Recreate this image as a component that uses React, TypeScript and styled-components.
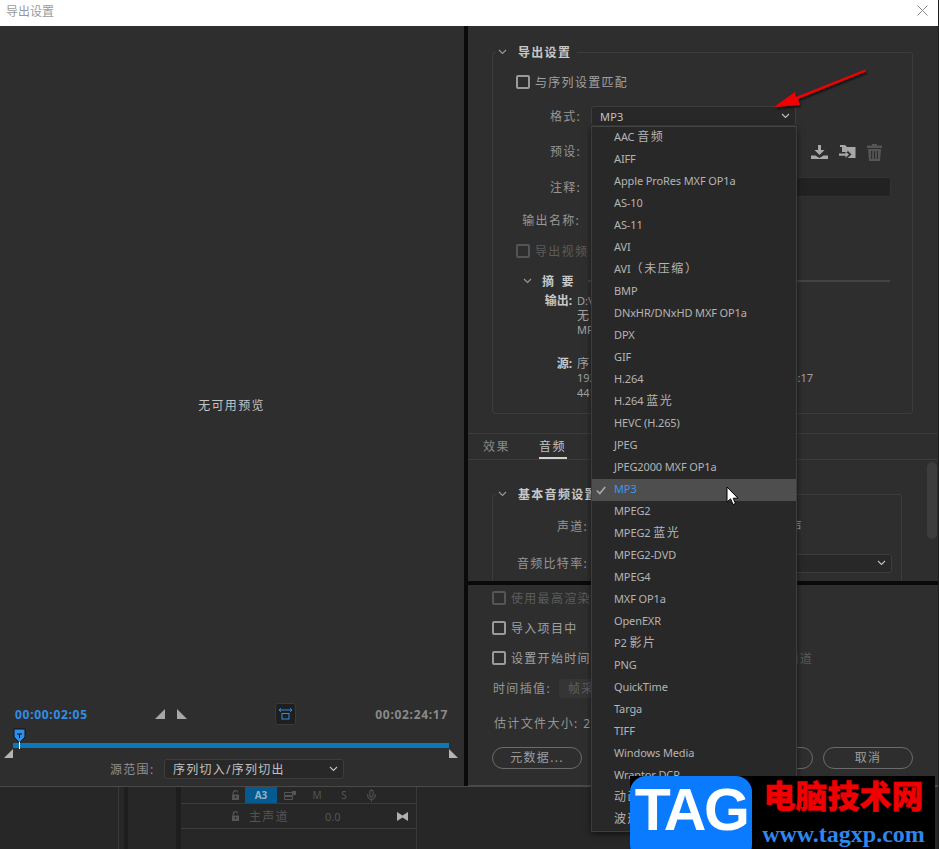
import React from "react";
import styled, { createGlobalStyle } from "styled-components";
import { Mic } from "lucide-react";

const Global = createGlobalStyle`
  html, body { margin: 0; padding: 0; background: #1c1c1c; }
  body { font-family: "Noto Sans", "Noto Sans CJK SC", sans-serif; font-size: 12px; color: #a9a9a9; }
  * { box-sizing: border-box; }
`;

const Page = styled.div`
  position: relative;
  width: 939px;
  height: 849px;
  overflow: hidden;
  padding-right: 1px;
  display: flex;
  flex-direction: column;
`;

const TitleBar = styled.div`
  height: 26px;
  background: #fff;
  display: flex;
  align-items: center;
  justify-content: space-between;
  padding: 0 10px 5px 6px;
  color: #9a9a9a;
  font-size: 12px;
`;

const Dialog = styled.div`
  height: 760px;
  display: flex;
  background: #2e2e2e;
`;

const LeftPanel = styled.div`
  width: 464px;
  display: flex;
  flex-direction: column;
`;

const Divider = styled.div`
  width: 4px;
  background: #0a0a0a;
`;

const RightPanel = styled.div`
  width: 470px;
  display: flex;
  flex-direction: column;
`;

const Preview = styled.div`
  height: 677px;
  padding-top: 372px;
  text-align: center;
  color: #c4c4c4;
  font-size: 12px;
  line-height: 16px;
  letter-spacing: 1.3px;
  margin-left: -1px;
`;

const TimeRow = styled.div`
  height: 22px;
  display: grid;
  grid-template-columns: 140px 120px auto 1fr;
  align-items: center;
  padding: 0 16px 0 15px;
`;

const TimeCode = styled.span<{ $blue?: boolean }>`
  font-size: 12px;
  font-weight: 700;
  letter-spacing: 0.7px;
  color: ${(p) => (p.$blue ? "#2f8fe8" : "#8a8a8a")};
  justify-self: ${(p) => (p.$blue ? "start" : "end")};
`;

const MarkGroup = styled.div`
  display: flex;
  gap: 12px;
  align-items: center;
`;

const FitButton = styled.div`
  width: 21px;
  height: 22px;
  background: #1f1f1f;
  border: 1px solid #3a3a3a;
  border-radius: 3px;
  display: flex;
  align-items: center;
  justify-content: center;
`;

const Track = styled.div`
  position: relative;
  height: 5px;
  margin: 18px 15px 0 13px;
  background: #0b78b8;
`;

const Playhead = styled.svg`
  position: absolute;
  left: 0;
  top: -15px;
`;

const TrackEnd = styled.svg<{ $right?: boolean }>`
  position: absolute;
  top: 6px;
  ${(p) => (p.$right ? "right: -9px;" : "left: -9px;")}
`;

const RangeRow = styled.div`
  display: flex;
  align-items: center;
  gap: 4px;
  margin: 11px 0 0 110px;
`;

const RangeLabel = styled.span`
  width: 50px;
  color: #8f8f8f;
  letter-spacing: 1.3px;
`;

const Select = styled.div<{ $w: number; $h?: number; $ml?: number; $end?: boolean }>`
  width: ${(p) => p.$w}px;
  height: ${(p) => p.$h ?? 20}px;
  margin-left: ${(p) => p.$ml ?? 0}px;
  background: #282828;
  border: 1px solid #3d3d3d;
  border-radius: 3px;
  display: flex;
  align-items: center;
  justify-content: ${(p) => (p.$end ? "flex-end" : "space-between")};
  padding: 0 5px 0 8px;
  color: #c2c2c2;
  letter-spacing: 1.25px;
  white-space: nowrap;
  overflow: hidden;
`;

const SelectValue = styled.span`
  font-size: 11px;
  letter-spacing: 0.2px;
`;

const UpperPane = styled.div`
  height: 407px;
  padding: 26px 25px 0 24px;
`;

const GroupBox = styled.div<{ $h: number; $w: number }>`
  width: ${(p) => p.$w}px;
  height: ${(p) => p.$h}px;
  border: 1px solid #3c3c3c;
  border-radius: 3px;
`;

const Legend = styled.div`
  margin: -10px 0 0 3px;
  height: 18px;
  width: fit-content;
  padding-right: 6px;
  background: #2e2e2e;
  display: flex;
  align-items: center;
  gap: 11px;
  padding-left: 2px;
  color: #c8c8c8;
  font-weight: 700;
  letter-spacing: 1.3px;
`;

const Row = styled.div<{ $mt: number }>`
  height: 20px;
  margin-top: ${(p) => p.$mt}px;
  display: flex;
  align-items: center;
  white-space: nowrap;
`;

const FieldLabel = styled.span<{ $w: number }>`
  width: ${(p) => p.$w}px;
  flex: none;
  text-align: right;
  color: #969696;
  letter-spacing: 1.3px;
`;

const CheckRow = styled(Row)<{ $x: number; $off?: boolean }>`
  margin-left: ${(p) => p.$x}px;
  gap: 5px;
  letter-spacing: 1.3px;
  color: ${(p) => (p.$off ? "#5c5c5c" : "#a0a0a0")};
`;

const Check = styled.span<{ $off?: boolean }>`
  width: 14px;
  height: 14px;
  border: 2px solid ${(p) => (p.$off ? "#555" : "#9a9a9a")};
  border-radius: 2px;
  flex: none;
`;

const ToolIcons = styled.div`
  margin-left: 230px;
  padding-top: 2px;
  display: flex;
  gap: 11px;
  align-items: center;
`;

const CommentInput = styled.div`
  width: 300px;
  height: 20px;
  margin-left: 10px;
  background: #222;
  border: 1px solid #333;
  border-radius: 3px;
`;

const SummaryHead = styled(Row)`
  margin-left: 30px;
  gap: 10px;
  color: #c8c8c8;
  font-weight: 700;
  letter-spacing: 2.2px;
`;

const SummaryRule = styled.div`
  flex: 1;
  height: 2px;
  margin: 0 22px 0 2px;
  background: #444;
`;

const SummaryGrid = styled.div`
  margin: 3px 0 0 32px;
  display: grid;
  grid-template-columns: 52px 236px;
  line-height: 14.5px;
  font-size: 11px;
  color: #a2a2a2;
`;

const SummaryKey = styled.span<{ $gap?: boolean }>`
  text-align: right;
  padding-right: 5px;
  font-size: 12px;
  font-weight: 700;
  color: #c8c8c8;
  ${(p) => p.$gap && "margin-top: 19px;"}
`;

const SummaryLine = styled.div<{ $gap?: boolean }>`
  display: flex;
  justify-content: space-between;
  white-space: nowrap;
  overflow: hidden;
  ${(p) => p.$gap && "margin-top: 19px;"}
`;

const TabBar = styled.div`
  height: 27px;
  border-top: 1px solid #3c3c3c;
  border-bottom: 1px solid #3c3c3c;
  display: flex;
  gap: 28px;
  padding-left: 15px;
`;

const Tab = styled.div<{ $on?: boolean }>`
  height: 25px;
  line-height: 26px;
  letter-spacing: 1.5px;
  color: ${(p) => (p.$on ? "#c4c4c4" : "#8a8a8a")};
  border-bottom: 2px solid ${(p) => (p.$on ? "#d0d0d0" : "transparent")};
  width: 28px;
  white-space: nowrap;
`;

const AudioPane = styled.div`
  height: 121px;
  position: relative;
  overflow: hidden;
  padding: 34px 0 0 24px;
`;

const ScrollThumb = styled.div`
  position: absolute;
  right: 1px;
  top: 2px;
  width: 10px;
  height: 77px;
  border-radius: 5px;
  background: #3d3d3d;
`;

const BlackBar = styled.div`
  height: 4px;
  background: #0a0a0a;
`;

const LowerPane = styled.div`
  flex: 1;
  padding: 3px 25px 0 24px;
  border-bottom: 1px solid #4a4a4a;
`;

const GhostText = styled.span<{ $bright?: boolean }>`
  margin-left: auto;
  color: ${(p) => (p.$bright ? "#969696" : "#5a5a5a")};
  letter-spacing: 1.3px;
  margin-right: ${(p) => (p.$bright ? 98 : 100)}px;
`;

const DimSelect = styled.div`
  width: 120px;
  height: 19px;
  margin-left: 8px;
  padding-left: 9px;
  line-height: 19px;
  background: #353535;
  border-radius: 2px;
  color: #5f5f5f;
  letter-spacing: 1.3px;
`;

const PlainText = styled.span<{ $ml?: number }>`
  color: #969696;
  letter-spacing: 1.35px;
  margin-left: ${(p) => p.$ml ?? 2}px;
`;

const ButtonRow = styled.div`
  margin-top: 14px;
  display: flex;
  justify-content: space-between;
`;

const ButtonPair = styled.div`
  display: flex;
  gap: 10px;
`;

const Pill = styled.div`
  width: 90px;
  height: 22px;
  border: 1px solid #6b6b6b;
  border-radius: 11px;
  text-align: center;
  line-height: 20px;
  color: #9e9e9e;
  letter-spacing: 1.3px;
`;

const Timeline = styled.div`
  flex: 1;
  display: flex;
  background: #272727;
  border-top: 1px solid #4a4a4a;
  color: #555;
`;

const Pane = styled.div<{ $w: number; $line?: boolean; $dark?: boolean }>`
  width: ${(p) => p.$w}px;
  flex: none;
  background: ${(p) => (p.$dark ? "#1e1e1e" : "transparent")};
  border-right: ${(p) => (p.$line ? "1px solid #3a3a3a" : "none")};
`;

const TrackRow = styled.div<{ $h: number }>`
  height: ${(p) => p.$h}px;
  border-bottom: 1px solid #3c3c3c;
  display: flex;
  align-items: center;
  padding-left: 50px;
  white-space: nowrap;
`;

const TrackA3 = styled.div`
  width: 32px;
  height: 100%;
  margin-left: 5px;
  background: #055b90;
  color: #8fb2ca;
  text-align: center;
  line-height: 16px;
  font-size: 10px;
  font-weight: 700;
`;

const TrackKey = styled.span<{ $w: number }>`
  width: ${(p) => p.$w}px;
  display: flex;
  justify-content: center;
  font-size: 10px;
`;

const MasterName = styled.span`
  margin-left: 9px;
  width: 76px;
  letter-spacing: 1.3px;
`;

const MasterValue = styled.span`
  width: 72px;
  font-size: 11px;
`;

const Menu = styled.div`
  position: absolute;
  left: 591px;
  top: 126px;
  width: 206px;
  background: #282828;
  border: 1px solid #3d3d3d;
  border-top-color: #444;
  box-shadow: 0 2px 6px rgba(0, 0, 0, 0.55);
`;

const MenuItem = styled.div<{ $on?: boolean }>`
  position: relative;
  height: 22px;
  padding-left: 22px;
  line-height: 19px;
  font-size: 11px;
  letter-spacing: -0.12px;
  white-space: nowrap;
  overflow: hidden;
  background: ${(p) => (p.$on ? "#4e4e4e" : "transparent")};
  color: ${(p) => (p.$on ? "#3a97ee" : "#b4b4b4")};
`;

const Cjk = styled.span`
  font-size: 12px;
  letter-spacing: 1.6px;
`;

const Tick = styled.svg`
  position: absolute;
  left: 4px;
  top: 7px;
`;

const Overlay = styled.svg<{ $x: number; $y: number }>`
  position: absolute;
  left: ${(p) => p.$x}px;
  top: ${(p) => p.$y}px;
  pointer-events: none;
`;

const Watermark = styled.div`
  position: absolute;
  left: 630px;
  top: 776px;
  width: 305px;
  height: 73px;
  background: #000;
  display: flex;
`;

const TagBadge = styled.div`
  width: 122px;
  height: 85px;
  background: #0a7aff;
  border-radius: 16px;
  color: #fff;
  font-family: "Liberation Sans", sans-serif;
  font-weight: 700;
  font-size: 59px;
  line-height: 68px;
  letter-spacing: -2.5px;
  text-align: center;
`;

const BrandCol = styled.div`
  flex: 1;
  display: flex;
  flex-direction: column;
  align-items: center;
`;

const BrandName = styled.div`
  color: #f00000;
  font-family: "Noto Sans CJK SC", sans-serif;
  font-weight: 900;
  font-size: 32px;
  line-height: 36px;
  -webkit-text-stroke: 0.4px #f00000;
`;

const BrandUrl = styled.div`
  color: #2f86ee;
  font-family: "Liberation Serif", serif;
  font-weight: 700;
  font-size: 24px;
  line-height: 22px;
  margin-top: 11px;
`;

const Chevron = ({ color = "#9a9a9a" }: { color?: string }) => (
  <svg width="9" height="6" viewBox="0 0 9 6" fill="none">
    <path d="M1 1l3.5 3.5L8 1" stroke={color} strokeWidth="1.1" />
  </svg>
);

const LockIcon = () => (
  <svg width="9" height="10" viewBox="0 0 9 10">
    <path d="M2.300 4.500V2.600C2.300 1.400 3.200.7 4.500.7s2 .6 2.200 1.600" fill="none" stroke="#555" strokeWidth="1.2" />
    <path d="M1 4.500h7V10H1zM3.800 6v2h1.400V6z" fill="#555" fillRule="evenodd" />
  </svg>
);

type Entry = { text: React.ReactNode; on?: boolean };

const formats: Entry[] = [
  { text: <>AAC <Cjk>音频</Cjk></> },
  { text: "AIFF" },
  { text: "Apple ProRes MXF OP1a" },
  { text: "AS-10" },
  { text: "AS-11" },
  { text: "AVI" },
  { text: <>AVI<Cjk>（未压缩）</Cjk></> },
  { text: "BMP" },
  { text: "DNxHR/DNxHD MXF OP1a" },
  { text: "DPX" },
  { text: "GIF" },
  { text: "H.264" },
  { text: <>H.264 <Cjk>蓝光</Cjk></> },
  { text: "HEVC (H.265)" },
  { text: "JPEG" },
  { text: "JPEG2000 MXF OP1a" },
  { text: "MP3", on: true },
  { text: "MPEG2" },
  { text: <>MPEG2 <Cjk>蓝光</Cjk></> },
  { text: "MPEG2-DVD" },
  { text: "MPEG4" },
  { text: "MXF OP1a" },
  { text: "OpenEXR" },
  { text: <>P2 <Cjk>影片</Cjk></> },
  { text: "PNG" },
  { text: "QuickTime" },
  { text: "Targa" },
  { text: "TIFF" },
  { text: "Windows Media" },
  { text: "Wraptor DCP" },
  { text: <Cjk>动画 GIF</Cjk> },
  { text: <Cjk>波形音频</Cjk> },
];

export default function App() {
  return (
    <Page>
      <Global />
      <TitleBar>
        导出设置
        <svg width="11" height="11" viewBox="0 0 11 11">
          <path d="M.5.5l10 10M10.500.5l-10 10" stroke="#8c8c8c" strokeWidth="1" />
        </svg>
      </TitleBar>

      <Dialog>
        <LeftPanel>
          <Preview>无可用预览</Preview>
          <TimeRow>
            <TimeCode $blue>00:00:02:05</TimeCode>
            <MarkGroup>
              <svg width="10" height="10"><path d="M10 0v10H0z" fill="#a8a8a8" /></svg>
              <svg width="10" height="10"><path d="M0 0v10h10z" fill="#a8a8a8" /></svg>
            </MarkGroup>
            <FitButton>
              <svg width="15" height="12" viewBox="0 0 15 12" fill="none" stroke="#2f8fe8">
                <path d="M1 2h13M3 .3L1 2l2 1.700M12 .3L14 2l-2 1.700" />
                <rect x="4" y="5.500" width="7" height="5.500" />
              </svg>
            </FitButton>
            <TimeCode>00:02:24:17</TimeCode>
          </TimeRow>
          <Track>
            <Playhead width="13" height="21" viewBox="0 0 13 21">
              <path d="M1 1h11v8l-5.500 6L1 9z" fill="#2f8fe8" stroke="#111" />
              <path d="M4 6h5M6.500 6v4" stroke="#111" />
              <path d="M6.500 14v7" stroke="#fff" />
            </Playhead>
            <TrackEnd width="9" height="9"><path d="M9 0v9H0z" fill="#b4b4b4" /></TrackEnd>
            <TrackEnd $right width="9" height="9"><path d="M0 0v9h9z" fill="#b4b4b4" /></TrackEnd>
          </Track>
          <RangeRow>
            <RangeLabel>源范围:</RangeLabel>
            <Select $w={180}>
              序列切入/序列切出
              <Chevron color="#c0c0c0" />
            </Select>
          </RangeRow>
        </LeftPanel>

        <Divider />

        <RightPanel>
          <UpperPane>
            <GroupBox $w={421} $h={362}>
              <Legend>
                <Chevron />
                导出设置
              </Legend>
              <CheckRow $mt={11} $x={23}>
                <Check />
                与序列设置匹配
              </CheckRow>
              <Row $mt={14}>
                <FieldLabel $w={88}>格式:</FieldLabel>
                <Select $w={205} $ml={10}>
                  <SelectValue>MP3</SelectValue>
                  <Chevron color="#c0c0c0" />
                </Select>
              </Row>
              <Row $mt={15}>
                <FieldLabel $w={88}>预设:</FieldLabel>
                <ToolIcons>
                  <svg width="17" height="14" viewBox="0 0 17 14" fill="#a8a8a8">
                    <path d="M7 0h3v5h3.500L8.500 10 3.500 5H7zM0 10.500h4.500L8.500 13l4-2.500H17V14H0z" />
                  </svg>
                  <svg width="17" height="16" viewBox="0 0 17 16" fill="#a8a8a8">
                    <path d="M1 1h5l2 2h8.500v11H8.500l4-3.500-4-4V8H3V3H1zM0 9.500h6.500V7.500l3.500 3-3.500 3.300v-2H0z" />
                  </svg>
                  <svg width="15" height="17" viewBox="0 0 15 17" fill="#555">
                    <path d="M5 0h5v1.500h5V4H0V1.500h5zM1 5h13l-1 12H2zM4 7v8h1.200V7zm2.900 0v8h1.200V7zm2.900 0v8H11V7z" fillRule="evenodd" />
                  </svg>
                </ToolIcons>
              </Row>
              <Row $mt={16}>
                <FieldLabel $w={88}>注释:</FieldLabel>
                <CommentInput />
              </Row>
              <Row $mt={13}>
                <FieldLabel $w={87}>输出名称:</FieldLabel>
              </Row>
              <CheckRow $mt={11} $x={23} $off>
                <Check $off />
                导出视频
              </CheckRow>
              <SummaryHead $mt={10}>
                <Chevron />
                摘 要
                <SummaryRule />
              </SummaryHead>
              <SummaryGrid>
                <SummaryKey>输出:</SummaryKey>
                <SummaryLine>D:\Users\序列 01.mp3</SummaryLine>
                <span />
                <SummaryLine><Cjk>无</Cjk></SummaryLine>
                <span />
                <SummaryLine>MP3</SummaryLine>
                <SummaryKey $gap>源:</SummaryKey>
                <SummaryLine $gap><Cjk>序列</Cjk></SummaryLine>
                <span />
                <SummaryLine>
                  <span>1920x1080</span>
                  <span>00:02:24:17</span>
                </SummaryLine>
                <span />
                <SummaryLine>44100 Hz</SummaryLine>
              </SummaryGrid>
            </GroupBox>
          </UpperPane>

          <TabBar>
            <Tab>效果</Tab>
            <Tab $on>音频</Tab>
          </TabBar>

          <AudioPane>
            <ScrollThumb />
            <GroupBox $w={410} $h={140}>
              <Legend>
                <Chevron />
                基本音频设置
              </Legend>
              <Row $mt={13}>
                <FieldLabel $w={95}>声道:</FieldLabel>
                <GhostText $bright>立体声</GhostText>
              </Row>
              <Row $mt={17}>
                <FieldLabel $w={95}>音频比特率:</FieldLabel>
                <Select $w={300} $h={19} $ml={4} $end>
                  <Chevron color="#c0c0c0" />
                </Select>
              </Row>
            </GroupBox>
          </AudioPane>

          <BlackBar />

          <LowerPane>
            <CheckRow $mt={0} $x={0} $off>
              <Check $off />
              使用最高渲染质量
            </CheckRow>
            <CheckRow $mt={10} $x={0}>
              <Check />
              导入项目中
            </CheckRow>
            <CheckRow $mt={10} $x={0}>
              <Check />
              设置开始时间码
              <GhostText>通道</GhostText>
            </CheckRow>
            <Row $mt={10}>
              <PlainText $ml={1}>时间插值:</PlainText>
              <DimSelect>帧采样</DimSelect>
            </Row>
            <Row $mt={15}>
              <PlainText>估计文件大小: 2 MB</PlainText>
            </Row>
            <ButtonRow>
              <Pill>元数据...</Pill>
              <ButtonPair>
                <Pill>确定</Pill>
                <Pill>取消</Pill>
              </ButtonPair>
            </ButtonRow>
          </LowerPane>
        </RightPanel>
      </Dialog>

      <Timeline>
        <Pane $w={119} $line />
        <Pane $w={5} />
        <Pane $w={4} $dark />
        <Pane $w={48} />
        <Pane $w={5} $dark />
        <Pane $w={236} $line>
          <TrackRow $h={17}>
            <LockIcon />
            <TrackA3>A3</TrackA3>
            <TrackKey $w={26}>
              <svg width="12" height="9" viewBox="0 0 12 9">
                <path d="M.5 1.500h8v3h-8zM.5 5.500h8v3h-8z" fill="none" stroke="#555" />
                <path d="M8 0h4v4H8z" fill="#555" />
              </svg>
            </TrackKey>
            <TrackKey $w={28}>M</TrackKey>
            <TrackKey $w={26}>S</TrackKey>
            <TrackKey $w={28}><Mic size={13} /></TrackKey>
          </TrackRow>
          <TrackRow $h={25}>
            <LockIcon />
            <MasterName>主声道</MasterName>
            <MasterValue>0.0</MasterValue>
            <svg width="11" height="9" viewBox="0 0 11 9"><path d="M0 0l5.500 3.500L11 0v9L5.500 5.500 0 9z" fill="#b0b0b0" /></svg>
          </TrackRow>
        </Pane>
      </Timeline>

      <Menu>
        {formats.map((f, i) => (
          <MenuItem key={i} $on={f.on}>
            {f.on && (
              <Tick width="10" height="9" viewBox="0 0 10 9">
                <path d="M.8 4.500l3 3L9.200 1" fill="none" stroke="#a8a8a8" strokeWidth="1.7" />
              </Tick>
            )}
            {f.text}
          </MenuItem>
        ))}
      </Menu>

      <Overlay $x={770} $y={66} width="100" height="46" viewBox="770 66 100 46">
        <defs>
          <filter id="arrowShadow" x="-20%" y="-20%" width="140%" height="160%">
            <feDropShadow dx="1" dy="2" stdDeviation="1.2" floodColor="#000" floodOpacity="0.7" />
          </filter>
        </defs>
        <path d="M774 107L795 92L796 97L865 69.500L866 71.500L798 99L800 105z" fill="#f00000" filter="url(#arrowShadow)" />
      </Overlay>

      <Overlay $x={726} $y={486} width="14" height="20" viewBox="0 0 14 20">
        <path d="M1 1v15l3.500-3.200L7 18.500l2.500-1-2.300-5.300h4.800z" fill="#fff" stroke="#000" strokeWidth="1" />
      </Overlay>

      <Watermark>
        <TagBadge>TAG</TagBadge>
        <BrandCol>
          <BrandName>电脑技术网</BrandName>
          <BrandUrl>www.tagxp.com</BrandUrl>
        </BrandCol>
      </Watermark>
    </Page>
  );
}
